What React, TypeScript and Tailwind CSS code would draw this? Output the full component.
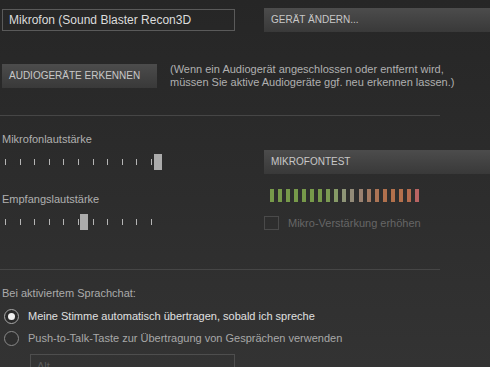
import React from "react";

const meterColors = [
  "#77994a", "#77994a", "#77994a", "#77994a", "#77994a", "#77994a", "#77994a", "#7b9a52",
  "#869a66", "#8e9577", "#938b78", "#9a8170", "#a47a62", "#ac7455", "#b0704d", "#b2704b",
  "#b4704c", "#b46c4e", "#b86463",
];

function Slider({ value }: { value: number }) {
  const ticks = Array.from({ length: 11 });
  const left = 3 + value * 14.8;
  return (
    <div className="relative h-[16px] w-[170px]">
      <div className="flex h-full w-[150px] items-center justify-between pl-[3px]">
        {ticks.map((_, i) => (
          <div key={i} className="h-[6px] w-[1px] bg-[#b5b5b5]" />
        ))}
      </div>
      <div
        className="absolute top-0 h-[16px] w-[8px] bg-[#ababab]"
        style={{ left: `${left}px` }}
      />
    </div>
  );
}

function Btn({ children, className = "" }: { children: React.ReactNode; className?: string }) {
  return (
    <div
      className={`flex h-[24px] items-center bg-gradient-to-b from-[#4c4c4c] to-[#393939] pl-[7px] text-[10px] text-[#c8c8c8] ${className}`}
    >
      {children}
    </div>
  );
}

export default function App() {
  return (
    <div
      className="h-[367px] w-[490px] overflow-hidden bg-gradient-to-b from-[#262626] to-[#333333] text-[11px] leading-[14px]"
      style={{ fontFamily: '"Liberation Sans", Arial, sans-serif' }}
    >
      {/* Row 1 */}
      <div className="flex pt-[8px]">
        <div className="ml-[2px] mt-[1px] flex h-[22px] w-[233px] items-center border border-[#5a5a5a] pl-[6px] text-[12px] text-[#dcdcdc]">
          Mikrofon (Sound Blaster Recon3D
        </div>
        <Btn className="ml-[29px] flex-1">GERÄT ÄNDERN...</Btn>
      </div>

      {/* Row 2 */}
      <div className="mt-[31px] flex items-center">
        <Btn className="ml-[2px] w-[155px]">AUDIOGERÄTE ERKENNEN</Btn>
        <div className="ml-[13px] text-[11px] leading-[13px] text-[#b0b0b0]">
          (Wenn ein Audiogerät angeschlossen oder entfernt wird,
          <br />
          müssen Sie aktive Audiogeräte ggf. neu erkennen lassen.)
        </div>
      </div>

      <div className="mt-[26px] h-[1px] w-[440px] bg-[#464646]" />

      {/* Sliders section */}
      <div className="flex">
        <div className="w-[264px] pl-[2px]">
          <div className="mt-[16px] text-[#b0b0b0]">Mikrofonlautstärke</div>
          <div className="mt-[8px]">
            <Slider value={10.05} />
          </div>
          <div className="mt-[22px] text-[#b0b0b0]">Empfangslautstärke</div>
          <div className="mt-[8px]">
            <Slider value={5.05} />
          </div>
        </div>
        <div className="flex-1">
          <Btn className="mt-[34px]">MIKROFONTEST</Btn>
          <div className="mt-[15px] flex h-[13px] w-[155px] justify-between pl-[6px]">
            {meterColors.map((c, i) => (
              <div key={i} className="h-[13px] w-[4px]" style={{ backgroundColor: c }} />
            ))}
          </div>
          <div className="mt-[14px] flex items-center">
            <div className="h-[14px] w-[15px] border border-[#4a4a4a]" />
            <span className="ml-[9px] text-[#666666]">Mikro-Verstärkung erhöhen</span>
          </div>
        </div>
      </div>

      <div className="mt-[39px] h-[1px] w-[440px] bg-[#464646]" />

      {/* Voice chat */}
      <div className="pl-[2px]">
        <div className="mt-[16px] text-[#ababab]">Bei aktiviertem Sprachchat:</div>
      </div>
      <div className="mt-[8px] flex h-[16px] items-center pl-[4px]">
        <div className="flex h-[15px] w-[15px] items-center justify-center rounded-full border-[1.5px] border-[#a8a8a8] bg-[#2a2a2a]">
          <div className="h-[7px] w-[7px] rounded-full bg-[#f0f0f0]" />
        </div>
        <span className="ml-[9px] text-[#e0e0e0]">
          Meine Stimme automatisch übertragen, sobald ich spreche
        </span>
      </div>
      <div className="mt-[6px] flex h-[16px] items-center pl-[4px]">
        <div className="h-[15px] w-[15px] rounded-full border-[1.5px] border-[#8a8a8a] bg-[#2e2e2e]" />
        <span className="ml-[9px] text-[#a8a8a8]">
          Push-to-Talk-Taste zur Übertragung von Gesprächen verwenden
        </span>
      </div>
      <div className="ml-[30px] mt-[8px] flex h-[22px] w-[205px] items-start border border-[#4e4e4e] pl-[6px] pt-[4px] text-[#5a5a5a]">
        Alt
      </div>
    </div>
  );
}
